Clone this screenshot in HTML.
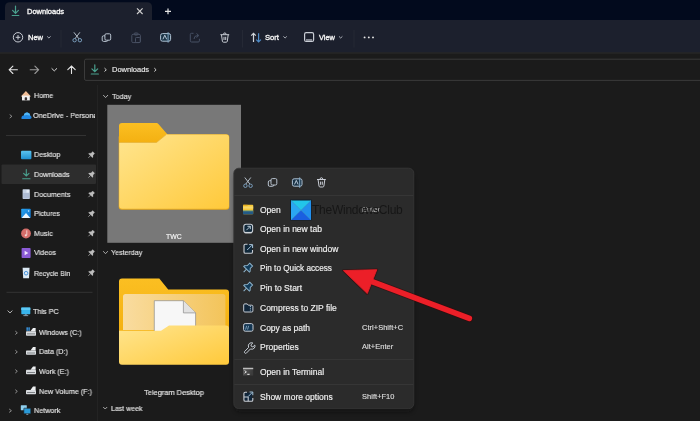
<!DOCTYPE html>
<html><head><meta charset="utf-8"><style>
html,body{margin:0;padding:0;width:700px;height:421px;overflow:hidden;background:#1b1b1b}
.layer{position:absolute;left:0;top:0}
.t{position:absolute;font-family:"Liberation Sans", sans-serif;white-space:nowrap;-webkit-text-stroke:0.15px currentColor;will-change:transform}
</style></head><body>
<svg class="layer" width="700" height="421" viewBox="0 0 700 421" style="z-index:1"><rect x="0" y="0" width="700" height="421" fill="#1b1b1b"/><rect x="0" y="0" width="700" height="20" fill="#020a1d"/><path d="M5,20 L5,7 Q5,2.3 10,2.3 L147,2.3 Q152,2.3 152,7 L152,20 Z" fill="#1c202d"/><rect x="0" y="20" width="700" height="32.5" fill="#1c202d"/><rect x="0" y="52.5" width="700" height="1" fill="#2c2c2c"/><g stroke="#4aa08e" stroke-width="1.2" fill="none" stroke-linecap="round"><path d="M15.5,6 V13.2 M12.6,10.4 L15.5,13.3 L18.4,10.4"/><path d="M12.2,15.5 H18.8"/></g><g stroke="#d2d2d2" stroke-width="1.1" fill="none"><path d="M137,8.3 L142.6,14 M142.6,8.3 L137,14"/></g><g stroke="#e6e6e6" stroke-width="1.2" fill="none"><path d="M168,8.6 V14.3 M165,11.45 H171"/></g><g stroke="#c9cdd5" stroke-width="1" fill="none"><circle cx="18" cy="37.3" r="4.7"/><path d="M18,35 V39.6 M15.7,37.3 H20.3"/></g><g stroke="#b8bcc4" stroke-width="0.9" fill="none"><path d="M47.2,36.4 L48.9,38 L50.6,36.4"/></g><g fill="#252935"><rect x="60.5" y="30" width="1" height="17.5"/><rect x="242" y="30" width="1" height="17.5"/><rect x="353.5" y="30" width="1" height="17.5"/></g><g stroke="#b4bec8" stroke-width="1" fill="none"><path d="M73.9,32.3 L78.9,38.8 M79.9,32.3 L74.9,38.8"/></g><g stroke="#7a9ebc" stroke-width="1" fill="none"><circle cx="74.6" cy="40.2" r="1.7"/><circle cx="79.9" cy="40.2" r="1.7"/></g><g stroke="#b9c4d0" stroke-width="1" fill="#1c202d"><rect x="102.2" y="35.8" width="5.6" height="5.6" rx="1.3"/><rect x="104.9" y="33.8" width="5.8" height="6.4" rx="1.3"/></g><g stroke="#485063" stroke-width="1" fill="none"><rect x="131.8" y="34.3" width="8.6" height="8.3" rx="1.3"/><rect x="134.2" y="33" width="3.8" height="2" rx="0.8"/><rect x="135.5" y="37.5" width="4.8" height="5" rx="0.8"/></g><rect x="160.6" y="33.6" width="10" height="7.6" rx="1.9" fill="#1a3346" stroke="#b0c4d6" stroke-width="1"/><path d="M162.9,39.3 L164.8,35.2 L166.7,39.3" stroke="#c8d8e6" stroke-width="0.9" fill="none"/><path d="M168.1,32.2 V42.6" stroke="#86acc8" stroke-width="1"/><g stroke="#465064" stroke-width="1" fill="none"><path d="M193.5,33.3 H191.5 Q190.3,33.3 190.3,34.5 V40.8 Q190.3,42 191.5,42 H198.2 Q199.4,42 199.4,40.8 V38.8"/><path d="M194,39 Q194,35.5 198,35.5 M196.5,33.5 L198.8,35.5 L196.5,37.5"/></g><g stroke="#c9cdd5" stroke-width="1" fill="none"><path d="M220.4,34.7 H229.2 M223.5,34.5 Q223.5,32.9 224.8,32.9 Q226.1,32.9 226.1,34.5"/><path d="M221.5,34.9 L222.4,41.3 Q222.6,42.2 223.5,42.2 H226.2 Q227.1,42.2 227.3,41.3 L228.2,34.9"/><path d="M224,36.8 V40 M225.7,36.8 V40"/></g><g stroke="#d0d4da" stroke-width="1.2" fill="none"><path d="M253.5,42 V33.3 M251.2,35.6 L253.5,33.3 L255.8,35.6"/></g><g stroke="#4f8cc8" stroke-width="1.2" fill="none"><path d="M258.6,33.3 V42 M256.3,39.7 L258.6,42 L260.9,39.7"/></g><g stroke="#b8bcc4" stroke-width="0.9" fill="none"><path d="M283.4,36.4 L285.1,38 L286.8,36.4 M339,36.4 L340.7,38 L342.4,36.4"/></g><g stroke="#c9cdd5" stroke-width="1.2" fill="none"><rect x="304.6" y="32.7" width="9" height="8.8" rx="1.5"/><path d="M306,40 H312.2"/></g><g fill="#e8e8e8"><circle cx="364.6" cy="37.4" r="0.95"/><circle cx="368.8" cy="37.4" r="0.95"/><circle cx="373" cy="37.4" r="0.95"/></g><g stroke="#e4e4e4" stroke-width="1.1" fill="none" stroke-linecap="round"><path d="M9.2,69.8 H17.4 M12.9,66.1 L9.2,69.8 L12.9,73.5"/><path d="M71.5,73.5 V66 M67.8,69.7 L71.5,66 L75.2,69.7"/></g><g stroke="#9a9a9a" stroke-width="1.1" fill="none" stroke-linecap="round"><path d="M30.2,69.8 H38.6 M34.9,66.1 L38.6,69.8 L34.9,73.5"/></g><g stroke="#d8d8d8" stroke-width="1" fill="none"><path d="M51.6,68.3 L54.3,70.9 L57,68.3"/></g><rect x="84.5" y="59.2" width="630" height="21.2" rx="1.5" fill="#1b1b1b" stroke="#3b3b3b" stroke-width="1"/><g stroke="#4aa08e" stroke-width="1.2" fill="none" stroke-linecap="round"><path d="M94.8,64.8 V71.6 M91.9,68.8 L94.8,71.7 L97.7,68.8"/><path d="M91.3,74 H98.4"/></g><g stroke="#d0d0d0" stroke-width="1" fill="none"><path d="M104.5,68.1 L106.3,69.8 L104.5,71.5 M154.3,68.1 L156.1,69.8 L154.3,71.5"/></g><rect x="97" y="85" width="1" height="336" fill="#232323"/><rect x="6" y="135" width="80" height="1" fill="#333333"/><rect x="6.5" y="291.8" width="86" height="1" fill="#333333"/><rect x="1.5" y="164.5" width="94.5" height="19.5" rx="1" fill="#2d2d2d"/><g stroke="#9c9c9c" stroke-width="0.9" fill="none"><path d="M9.7,114.6 L11.9,116.3 L9.7,118 M9.2,409 L11.4,410.7 L9.2,412.4 M15.3,331.1 L17.3,332.8 L15.3,334.5 M15.3,350.2 L17.3,351.9 L15.3,353.6 M15.3,369.6 L17.3,371.3 L15.3,373 M15.3,389.7 L17.3,391.4 L15.3,393.1"/><path d="M7.6,310.6 L10,312.9 L12.4,310.6" stroke="#c8c8c8"/></g><path d="M20.8,96.4 L25.9,90.9 L31,96.4 Z" fill="#f0bc94"/><rect x="22" y="95.6" width="7.8" height="4.8" fill="#f0f0f0"/><rect x="24.7" y="97.2" width="2.4" height="3.2" rx="0.8" fill="#3a3232"/><path d="M21.5,118.9 Q21,115.6 23.8,115.4 Q24.5,112.3 27.5,112.6 Q30,112.9 30.3,115.7 Q31.7,116 31.6,117.6 Q31.5,118.9 30,118.9 Z" fill="#2288e2"/><path d="M23.8,115.4 Q24.5,112.3 27.5,112.6 Q30,112.9 30.3,115.7 Q27,114.6 23.8,115.4Z" fill="#52b6f4"/><defs><linearGradient id="gdesk" x1="0" y1="0" x2="0" y2="1"><stop offset="0" stop-color="#5cc4f0"/><stop offset="1" stop-color="#1f8fd0"/></linearGradient><linearGradient id="gpic" x1="0" y1="0" x2="1" y2="1"><stop offset="0" stop-color="#2aa4f0"/><stop offset="1" stop-color="#0c72d0"/></linearGradient></defs><rect x="21" y="150.7" width="10.4" height="8.6" rx="1" fill="url(#gdesk)"/><g stroke="#4aa08e" stroke-width="1.1" fill="none" stroke-linecap="round"><path d="M26.3,169.5 V176 M23.6,173.3 L26.3,176 L29,173.3"/><path d="M22.7,178.7 H30"/></g><rect x="22.6" y="189.2" width="7.2" height="9.8" rx="0.7" fill="#c6d2e4"/><rect x="23.2" y="193" width="6" height="5.4" fill="#aebcd4"/><rect x="26.5" y="190" width="2.6" height="2.6" fill="#e4ecf6"/><rect x="21.2" y="208.8" width="9.5" height="9.2" rx="0.8" fill="url(#gpic)"/><path d="M21.6,218 L26,213 L30.3,218 Z" fill="#eaf6ff"/><circle cx="28.6" cy="211" r="0.8" fill="#cfeaff"/><circle cx="26" cy="233.5" r="4.9" fill="#d46e6a"/><path d="M26.8,230.3 V235.2" stroke="#f4d8d6" stroke-width="0.9"/><circle cx="25.8" cy="235.3" r="1.1" fill="#f4d8d6"/><rect x="21.6" y="248" width="9" height="10" rx="0.8" fill="#8b5bd6"/><path d="M24.6,250.8 L28.4,253 L24.6,255.2 Z" fill="#f0e6ff"/><path d="M22.6,267.8 H29.6 L29,278.3 H23.2 Z" fill="#dbe9f5"/><circle cx="26.1" cy="273.2" r="1.8" fill="none" stroke="#3a8ad8" stroke-width="0.9"/><g transform="translate(91.2,155) scale(0.78) rotate(45)" fill="#bdbdbd" stroke="#bdbdbd" stroke-width="0.3"><path d="M-1.8,-4.5 H1.8 V-1.5 L3.6,0.4 V1.3 H-3.6 V0.4 L-1.8,-1.5 Z"/><path d="M0,1.3 V5" stroke-width="0.9"/></g><g transform="translate(91.2,174.8) scale(0.78) rotate(45)" fill="#bdbdbd" stroke="#bdbdbd" stroke-width="0.3"><path d="M-1.8,-4.5 H1.8 V-1.5 L3.6,0.4 V1.3 H-3.6 V0.4 L-1.8,-1.5 Z"/><path d="M0,1.3 V5" stroke-width="0.9"/></g><g transform="translate(91.2,194.4) scale(0.78) rotate(45)" fill="#bdbdbd" stroke="#bdbdbd" stroke-width="0.3"><path d="M-1.8,-4.5 H1.8 V-1.5 L3.6,0.4 V1.3 H-3.6 V0.4 L-1.8,-1.5 Z"/><path d="M0,1.3 V5" stroke-width="0.9"/></g><g transform="translate(91.2,213.9) scale(0.78) rotate(45)" fill="#bdbdbd" stroke="#bdbdbd" stroke-width="0.3"><path d="M-1.8,-4.5 H1.8 V-1.5 L3.6,0.4 V1.3 H-3.6 V0.4 L-1.8,-1.5 Z"/><path d="M0,1.3 V5" stroke-width="0.9"/></g><g transform="translate(91.2,233.5) scale(0.78) rotate(45)" fill="#bdbdbd" stroke="#bdbdbd" stroke-width="0.3"><path d="M-1.8,-4.5 H1.8 V-1.5 L3.6,0.4 V1.3 H-3.6 V0.4 L-1.8,-1.5 Z"/><path d="M0,1.3 V5" stroke-width="0.9"/></g><g transform="translate(91.2,253) scale(0.78) rotate(45)" fill="#bdbdbd" stroke="#bdbdbd" stroke-width="0.3"><path d="M-1.8,-4.5 H1.8 V-1.5 L3.6,0.4 V1.3 H-3.6 V0.4 L-1.8,-1.5 Z"/><path d="M0,1.3 V5" stroke-width="0.9"/></g><g transform="translate(91.2,273) scale(0.78) rotate(45)" fill="#bdbdbd" stroke="#bdbdbd" stroke-width="0.3"><path d="M-1.8,-4.5 H1.8 V-1.5 L3.6,0.4 V1.3 H-3.6 V0.4 L-1.8,-1.5 Z"/><path d="M0,1.3 V5" stroke-width="0.9"/></g><rect x="21.3" y="307.6" width="9" height="6.6" rx="0.6" fill="#38b4ec"/><rect x="21.3" y="307.6" width="9" height="2.4" fill="#5cc8f4"/><rect x="24.8" y="314.2" width="2" height="1.2" fill="#7f96a8"/><rect x="23.4" y="315.2" width="4.8" height="0.9" fill="#8ca2b4"/><g transform="translate(26,332.6)"><rect x="0" y="-1.3" width="10" height="4.4" rx="0.7" fill="#d9dcdf"/><rect x="1" y="0.9" width="8" height="0.8" fill="#6a6e72"/><path d="M4.5,-1.3 L7,-4.6 H9.6 V-1.3Z" fill="#eef0f2"/></g><g transform="translate(26,351.7)"><rect x="0" y="-1.3" width="10" height="4.4" rx="0.7" fill="#d9dcdf"/><rect x="1" y="0.9" width="8" height="0.8" fill="#6a6e72"/><path d="M4.5,-1.3 L7,-4.6 H9.6 V-1.3Z" fill="#eef0f2"/></g><g transform="translate(26,371.1)"><rect x="0" y="-1.3" width="10" height="4.4" rx="0.7" fill="#d9dcdf"/><rect x="1" y="0.9" width="8" height="0.8" fill="#6a6e72"/><path d="M4.5,-1.3 L7,-4.6 H9.6 V-1.3Z" fill="#eef0f2"/></g><g transform="translate(26,391.2)"><rect x="0" y="-1.3" width="10" height="4.4" rx="0.7" fill="#d9dcdf"/><rect x="1" y="0.9" width="8" height="0.8" fill="#6a6e72"/><path d="M4.5,-1.3 L7,-4.6 H9.6 V-1.3Z" fill="#eef0f2"/></g><g transform="translate(26.4,327.4)" fill="#3a9ae8"><rect x="0" y="0" width="1.6" height="1.5"/><rect x="1.9" y="0" width="1.6" height="1.5"/><rect x="0" y="1.8" width="1.6" height="1.5"/><rect x="1.9" y="1.8" width="1.6" height="1.5"/></g><rect x="20.8" y="405.2" width="6" height="5" rx="0.5" fill="#8fd0f0"/><rect x="23.8" y="408.2" width="7" height="5.6" rx="0.5" fill="#2a9ad8" stroke="#1b1b1b" stroke-width="0.6"/><rect x="26.3" y="413.8" width="2" height="1" fill="#8aa0b0"/><g stroke="#b8b8b8" stroke-width="0.9" fill="none"><path d="M103.2,95 L105.6,97.6 L108,95 M103.2,251.2 L105.5,253.7 L107.8,251.2 M103.2,407 L105.2,409 L107.2,407"/></g><rect x="107.3" y="104.8" width="133.7" height="138" fill="#787878"/><defs><linearGradient id="gfront" x1="0" y1="0" x2="1" y2="1"><stop offset="0" stop-color="#ffe58f"/><stop offset="1" stop-color="#ffc93a"/></linearGradient><linearGradient id="gtab" x1="0" y1="0" x2="0" y2="1"><stop offset="0" stop-color="#fbbf22"/><stop offset="1" stop-color="#f2ad0e"/></linearGradient><linearGradient id="gback2" x1="0" y1="0" x2="1" y2="0"><stop offset="0" stop-color="#f9dca0"/><stop offset="1" stop-color="#f3c45a"/></linearGradient></defs><rect x="118.7" y="134.3" width="110.6" height="75.4" rx="3.2" fill="#eaaa1a"/><path d="M119,147 V126 Q119,123 122,123 H156.5 Q157.6,123 158.4,124 L167.5,134.5 V147 Z" fill="url(#gtab)"/><path d="M119.2,208.5 V142.2 H156.5 L166,134.6 H226 Q229,134.6 229,137.6 V205.7 Q229,208.7 226,208.7 H122.2 Q119.2,208.7 119.2,205.7 Z" fill="url(#gfront)"/><path d="M119,142.5 H156.5 L166,134.8" stroke="#d99a10" stroke-width="0.8" fill="none" opacity="0.6"/><path d="M119,345 V281.6 Q119,278.6 122,278.6 H159.3 L168.2,289.6 H226 Q229,289.6 229,292.6 V345 Z" fill="url(#gtab)"/><path d="M123,330 V296.6 Q123,294.1 125.5,294.1 H222.9 Q225.4,294.1 225.4,296.6 V330 Z" fill="url(#gback2)"/><path d="M154.3,335 V300.7 H183.4 L195.6,312.9 V335 Z" fill="#f7f7f7" stroke="#8c8c8c" stroke-width="0.7"/><path d="M183.4,300.7 V312.9 H195.6" fill="#e2e2e2" stroke="#8c8c8c" stroke-width="0.7"/><path d="M119,364.8 V330.7 H161 L169,325.4 H226 Q229,325.4 229,328.4 V361.8 Q229,364.8 226,364.8 H122 Q119,364.8 119,361.8 Z" fill="url(#gfront)"/></svg>
<div class="t" style="left:27.30px;top:7.55px;font-size:7.5px;line-height:7.5px;color:#f4f4f4;z-index:2;-webkit-text-stroke:0.35px #f4f4f4">Downloads</div><div class="t" style="left:28.30px;top:33.85px;font-size:7.5px;line-height:7.5px;color:#f2f2f2;z-index:2;-webkit-text-stroke:0.35px #f2f2f2">New</div><div class="t" style="left:265.40px;top:33.77px;font-size:7.6px;line-height:7.6px;color:#f2f2f2;z-index:2;-webkit-text-stroke:0.35px #f2f2f2">Sort</div><div class="t" style="left:318.60px;top:33.93px;font-size:7.4px;line-height:7.4px;color:#f2f2f2;z-index:2;-webkit-text-stroke:0.35px #f2f2f2">View</div><div class="t" style="left:112.00px;top:65.75px;font-size:7.5px;line-height:7.5px;color:#e8e8e8;z-index:2;">Downloads</div><div class="t" style="left:33.80px;top:92.47px;font-size:7.83px;line-height:7.83px;color:#e8e8e8;z-index:2;transform:scaleX(0.92);transform-origin:0 0;">Home</div><div class="t" style="left:33.00px;top:112.39px;font-size:7.93px;line-height:7.93px;color:#e8e8e8;z-index:2;transform:scaleX(0.92);transform-origin:0 0;width:67px;overflow:hidden;white-space:nowrap">OneDrive - Personal</div><div class="t" style="left:33.80px;top:151.47px;font-size:7.83px;line-height:7.83px;color:#e8e8e8;z-index:2;transform:scaleX(0.92);transform-origin:0 0;">Desktop</div><div class="t" style="left:33.80px;top:171.27px;font-size:7.83px;line-height:7.83px;color:#e8e8e8;z-index:2;transform:scaleX(0.92);transform-origin:0 0;">Downloads</div><div class="t" style="left:33.80px;top:190.87px;font-size:7.83px;line-height:7.83px;color:#e8e8e8;z-index:2;transform:scaleX(0.92);transform-origin:0 0;">Documents</div><div class="t" style="left:33.80px;top:210.37px;font-size:7.83px;line-height:7.83px;color:#e8e8e8;z-index:2;transform:scaleX(0.92);transform-origin:0 0;">Pictures</div><div class="t" style="left:33.80px;top:229.97px;font-size:7.83px;line-height:7.83px;color:#e8e8e8;z-index:2;transform:scaleX(0.92);transform-origin:0 0;">Music</div><div class="t" style="left:33.80px;top:249.47px;font-size:7.83px;line-height:7.83px;color:#e8e8e8;z-index:2;transform:scaleX(0.92);transform-origin:0 0;">Videos</div><div class="t" style="left:33.80px;top:269.79px;font-size:7.45px;line-height:7.45px;color:#e8e8e8;z-index:2;transform:scaleX(0.92);transform-origin:0 0;">Recycle Bin</div><div class="t" style="left:33.40px;top:308.27px;font-size:7.83px;line-height:7.83px;color:#e8e8e8;z-index:2;transform:scaleX(0.92);transform-origin:0 0;">This PC</div><div class="t" style="left:38.50px;top:329.36px;font-size:7.72px;line-height:7.72px;color:#e8e8e8;z-index:2;transform:scaleX(0.92);transform-origin:0 0;">Windows (C:)</div><div class="t" style="left:38.50px;top:348.46px;font-size:7.72px;line-height:7.72px;color:#e8e8e8;z-index:2;transform:scaleX(0.92);transform-origin:0 0;">Data (D:)</div><div class="t" style="left:38.50px;top:367.86px;font-size:7.72px;line-height:7.72px;color:#e8e8e8;z-index:2;transform:scaleX(0.92);transform-origin:0 0;">Work (E:)</div><div class="t" style="left:38.50px;top:387.96px;font-size:7.72px;line-height:7.72px;color:#e8e8e8;z-index:2;transform:scaleX(0.92);transform-origin:0 0;">New Volume (F:)</div><div class="t" style="left:34.00px;top:407.07px;font-size:7.83px;line-height:7.83px;color:#e8e8e8;z-index:2;transform:scaleX(0.92);transform-origin:0 0;">Network</div><div class="t" style="left:111.50px;top:92.75px;font-size:7.74px;line-height:7.74px;color:#e4e4e4;z-index:2;transform:scaleX(0.93);transform-origin:0 0;">Today</div><div class="t" style="left:110.70px;top:248.94px;font-size:7.63px;line-height:7.63px;color:#e4e4e4;z-index:2;transform:scaleX(0.93);transform-origin:0 0;">Yesterday</div><div class="t" style="left:111.00px;top:404.92px;font-size:7.53px;line-height:7.53px;color:#e4e4e4;z-index:2;transform:scaleX(0.93);transform-origin:0 0;">Last week</div><div class="t" style="left:166.40px;top:234.16px;font-size:6.9px;line-height:6.9px;color:#f4f4f4;z-index:2;">TWC</div><div class="t" style="left:144.00px;top:389.42px;font-size:8.01px;line-height:8.01px;color:#ececec;z-index:2;transform:scaleX(0.93);transform-origin:0 0;">Telegram Desktop</div><div class="t" style="left:259.80px;top:205.90px;font-size:8.5px;line-height:8.5px;color:#f2f2f2;z-index:4;">Open</div><div class="t" style="left:259.80px;top:225.40px;font-size:8.5px;line-height:8.5px;color:#f2f2f2;z-index:4;">Open in new tab</div><div class="t" style="left:259.80px;top:245.20px;font-size:8.5px;line-height:8.5px;color:#f2f2f2;z-index:4;">Open in new window</div><div class="t" style="left:259.80px;top:265.26px;font-size:8.2px;line-height:8.2px;color:#f2f2f2;z-index:4;">Pin to Quick access</div><div class="t" style="left:259.80px;top:284.40px;font-size:8.5px;line-height:8.5px;color:#f2f2f2;z-index:4;">Pin to Start</div><div class="t" style="left:259.80px;top:303.70px;font-size:8.5px;line-height:8.5px;color:#f2f2f2;z-index:4;">Compress to ZIP file</div><div class="t" style="left:259.80px;top:323.70px;font-size:8.5px;line-height:8.5px;color:#f2f2f2;z-index:4;">Copy as path</div><div class="t" style="left:259.80px;top:343.10px;font-size:8.5px;line-height:8.5px;color:#f2f2f2;z-index:4;">Properties</div><div class="t" style="left:259.80px;top:367.90px;font-size:8.5px;line-height:8.5px;color:#f2f2f2;z-index:4;">Open in Terminal</div><div class="t" style="left:259.80px;top:392.70px;font-size:8.5px;line-height:8.5px;color:#f2f2f2;z-index:4;">Show more options</div><div class="t" style="left:362.20px;top:206.39px;font-size:7.45px;line-height:7.45px;color:#b8b8b8;z-index:4;letter-spacing:0.05px">Enter</div><div class="t" style="left:362.20px;top:323.99px;font-size:7.45px;line-height:7.45px;color:#dcdcdc;z-index:4;letter-spacing:0.05px">Ctrl+Shift+C</div><div class="t" style="left:362.20px;top:343.39px;font-size:7.45px;line-height:7.45px;color:#dcdcdc;z-index:4;letter-spacing:0.05px">Alt+Enter</div><div class="t" style="left:362.20px;top:393.29px;font-size:7.45px;line-height:7.45px;color:#dcdcdc;z-index:4;letter-spacing:0.05px">Shift+F10</div><div class="t" style="left:312.40px;top:204.44px;font-size:12px;line-height:12px;color:#161616;z-index:6;-webkit-text-stroke:0px;letter-spacing:-0.25px">TheWindowsClub</div>
<svg class="layer" width="700" height="421" viewBox="0 0 700 421" style="z-index:3"><defs><filter id="msh" x="-20%" y="-20%" width="140%" height="140%"><feGaussianBlur stdDeviation="2"/></filter></defs><rect x="234.5" y="172" width="179" height="240" rx="6" fill="#0c0c0c" opacity="0.5" filter="url(#msh)"/><rect x="233.8" y="168.2" width="180" height="240.4" rx="5" fill="#2b2b2b" stroke="#393939" stroke-width="0.8"/><g fill="#383838"><rect x="234.3" y="195" width="179" height="0.9"/><rect x="234.3" y="359.2" width="179" height="0.9"/><rect x="234.3" y="384" width="179" height="0.9"/></g><g stroke="#b4bec8" stroke-width="1" fill="none"><path d="M244.8,177.5 L249.8,184 M250.8,177.5 L245.8,184"/></g><g stroke="#7a9ebc" stroke-width="1" fill="none"><circle cx="245.4" cy="185.8" r="1.7"/><circle cx="250.6" cy="185.8" r="1.7"/></g><g stroke="#b9c4d0" stroke-width="1" fill="#2b2b2b"><rect x="268.3" y="180.7" width="5.6" height="5.6" rx="1.3"/><rect x="271" y="178.6" width="5.8" height="6.4" rx="1.3"/></g><rect x="292.4" y="178.8" width="9.6" height="7.4" rx="1.8" fill="#1a3346" stroke="#b0c4d6" stroke-width="1"/><path d="M294.5,184.4 L296.3,180.4 L298.1,184.4" stroke="#c8d8e6" stroke-width="0.9" fill="none"/><path d="M299.7,177.4 V187.8" stroke="#86acc8" stroke-width="1"/><g stroke="#c9cdd5" stroke-width="1" fill="none"><path d="M317,179.5 H325.8 M320.1,179.3 Q320.1,177.7 321.4,177.7 Q322.7,177.7 322.7,179.3"/><path d="M318.1,179.7 L319,186.1 Q319.2,187 320.1,187 H322.8 Q323.7,187 323.9,186.1 L324.8,179.7"/><path d="M320.6,181.6 V184.8 M322.3,181.6 V184.8"/></g><rect x="243" y="204.8" width="10.2" height="9.5" rx="0.8" fill="#f6c83a"/><rect x="243" y="204.8" width="4.6" height="1.5" fill="#e8b020"/><rect x="243" y="206.4" width="10.2" height="2.2" fill="#f8d868"/><rect x="243" y="210.8" width="10.2" height="3.5" fill="#235a86"/><rect x="243" y="210.5" width="10.2" height="0.8" fill="#6a9a78"/><rect x="243.8" y="224.2" width="8.8" height="8.6" rx="2.2" fill="#10283a" stroke="#c6ccd4" stroke-width="1.1"/><path d="M244.6,232.6 H251.8" stroke="#d0d4d8" stroke-width="1.4"/><path d="M246.4,230.2 L250.2,226.4 M247.4,226.3 H250.3 V229.2" stroke="#c8d8e4" stroke-width="0.9" fill="none"/><path d="M244.7,244.5 H252 V252.8 H244.7 Z" fill="#10283a"/><g stroke="#c6ccd4" stroke-width="1.1" fill="none"><path d="M247.5,244.3 H245.3 Q244,244.3 244,245.6 V252 Q244,253.3 245.3,253.3 H251.2 Q252.5,253.3 252.5,252 V250"/></g><path d="M247.2,250 L252,245.2 M249.2,244.6 H252.6 V248" stroke="#a8c4da" stroke-width="1" fill="none"/><g transform="translate(247.6,268.2) scale(1.12) rotate(45)" fill="#123c5a" stroke="#8fb4cc" stroke-width="0.85"><path d="M-1.8,-4.5 H1.8 V-1.5 L3.6,0.4 V1.3 H-3.6 V0.4 L-1.8,-1.5 Z"/><path d="M0,1.3 V5" stroke-width="0.9"/></g><g transform="translate(247.6,287.2) scale(1.12) rotate(45)" fill="#123c5a" stroke="#8fb4cc" stroke-width="0.85"><path d="M-1.8,-4.5 H1.8 V-1.5 L3.6,0.4 V1.3 H-3.6 V0.4 L-1.8,-1.5 Z"/><path d="M0,1.3 V5" stroke-width="0.9"/></g><path d="M243.7,305 Q243.7,303.9 244.8,303.9 H247.2 L248.3,305.2 H251.8 Q252.9,305.2 252.9,306.3 V310.9 Q252.9,312 251.8,312 H244.8 Q243.7,312 243.7,310.9 Z" fill="#11263a" stroke="#c6ccd4" stroke-width="1"/><path d="M250.4,306 V311.5" stroke="#9ec0da" stroke-width="1" stroke-dasharray="1,0.8"/><rect x="243.6" y="323.6" width="9.4" height="7.6" rx="1.6" fill="#143652" stroke="#c6ccd4" stroke-width="1"/><path d="M245.6,329.6 L246.6,325.8 M247.6,329.6 L248.6,325.8" stroke="#a8c8e0" stroke-width="0.7" fill="none"/><g stroke="#c6ccd4" stroke-width="1" fill="none"><path d="M244.5,351.6 L248.6,347.4 Q247.6,344.8 249.6,343.3 Q251.2,342.3 252.8,343 L250.9,344.9 L251.4,346.4 L252.9,346.9 L254.8,345 Q255.4,346.8 254.2,348.2 Q252.8,349.8 250.4,349 L246.3,353.2 Q245.4,353.6 244.8,353 Q244.2,352.4 244.5,351.6 Z"/></g><defs><linearGradient id="gterm" x1="0" y1="0" x2="1" y2="0.3"><stop offset="0" stop-color="#5a5a5a"/><stop offset="1" stop-color="#3c3c3c"/></linearGradient></defs><rect x="243" y="367.8" width="10.2" height="7.6" rx="0.5" fill="url(#gterm)"/><rect x="243" y="367.8" width="10.2" height="1.4" fill="#bdbdbd"/><path d="M244.6,370.6 L246.4,371.9 L244.6,373.2" stroke="#f4f4f4" stroke-width="0.9" fill="none"/><path d="M247.3,374.3 H249.6" stroke="#f4f4f4" stroke-width="1"/><path d="M244.5,392.6 H252.2 V400.6 H244.5 Z" fill="#11263a"/><g stroke="#c6ccd4" stroke-width="1.1" fill="none"><path d="M247,392.2 H245.2 Q243.9,392.2 243.9,393.5 V399.9 Q243.9,401.2 245.2,401.2 H251.5 Q252.8,401.2 252.8,399.9 V398"/><path d="M244,397 H248.2 V401.2"/></g><path d="M248.3,396.4 L252.4,392.3 M249.6,392 H252.8 V395.2" stroke="#a0c0d8" stroke-width="1" fill="none"/></svg>
<svg class="layer" width="700" height="421" viewBox="0 0 700 421" style="z-index:5"><rect x="290.2" y="199.6" width="21.4" height="20.8" fill="#0d1c2c"/><path d="M291,200.4 L311,200.4 L301,210.3 Z" fill="#22c6ea"/><path d="M291,200.4 L301,210.3 L291,220 Z" fill="#2aa6f2"/><path d="M311,200.4 L311,220 L301,210.3 Z" fill="#2290ee"/><path d="M291,220 L301,210.3 L311,220 Z" fill="#1a5fe0"/><path d="M291,200.4 L311,220 M311,200.4 L291,220" stroke="#5ad8ff" stroke-width="0.6" opacity="0.6"/><g opacity="0.55"><path d="M372.7,281.9 L469.3,318.4" stroke="#3a0808" stroke-width="7.4" stroke-linecap="round"/><path d="M343.2,270.5 L377,269.6 L367.3,293.8 Z" fill="#3a0808" stroke="#3a0808" stroke-width="2.4" stroke-linejoin="round"/></g><path d="M372.7,281.9 L469.3,318.4" stroke="#ec1f28" stroke-width="5.6" stroke-linecap="round"/><path d="M343.4,270.6 L376.8,269.7 L367.3,293.6 Z" fill="#ec1f28" stroke="#ec1f28" stroke-width="0.8" stroke-linejoin="round"/></svg>
</body></html>
